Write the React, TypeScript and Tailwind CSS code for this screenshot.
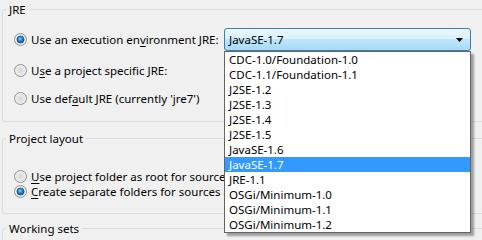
import React from "react";

const items = [
  "CDC-1.0/Foundation-1.0",
  "CDC-1.1/Foundation-1.1",
  "J2SE-1.2",
  "J2SE-1.3",
  "J2SE-1.4",
  "J2SE-1.5",
  "JavaSE-1.6",
  "JavaSE-1.7",
  "JRE-1.1",
  "OSGi/Minimum-1.0",
  "OSGi/Minimum-1.1",
  "OSGi/Minimum-1.2",
];

function Radio({ checked }: { checked?: boolean }) {
  return (
    <svg width="13" height="13" viewBox="0 0 13 13" className="shrink-0">
      <defs>
        <radialGradient id="rbg" cx="50%" cy="50%" r="60%">
          <stop offset="0%" stopColor="#d6d6d6" />
          <stop offset="100%" stopColor="#fafafa" />
        </radialGradient>
        <radialGradient id="rdot" cx="45%" cy="40%" r="60%">
          <stop offset="0%" stopColor="#8fd3ff" />
          <stop offset="45%" stopColor="#2b8ad6" />
          <stop offset="100%" stopColor="#0c4a84" />
        </radialGradient>
      </defs>
      <circle cx="6.5" cy="6.5" r="6" fill="url(#rbg)" stroke="#8e8f8f" strokeWidth="1" />
      <circle cx="6.5" cy="6.5" r="4.5" fill="none" stroke="#e6e6e6" strokeWidth="1" />
      {checked && <circle cx="6.5" cy="6.5" r="3.6" fill="url(#rdot)" stroke="#1b4f7e" strokeWidth="0.6" />}
    </svg>
  );
}

function Option({
  checked,
  pre,
  u,
  post,
  className,
}: {
  checked?: boolean;
  pre: string;
  u: string;
  post: string;
  className?: string;
}) {
  return (
    <div className={"flex items-center gap-[4px] pl-[11px] whitespace-nowrap " + (className ?? "")}>
      <Radio checked={checked} />
      <span>
        {pre}
        <span className="underline underline-offset-2">{u}</span>
        {post}
      </span>
    </div>
  );
}

export default function App() {
  return (
    <div
      className="relative w-[482px] h-[240px] overflow-hidden bg-[#f0f0f0] pl-[2px] text-[11.5px] leading-[15px] text-black"
      style={{ fontFamily: '"Segoe UI", "Noto Sans", sans-serif' }}
    >
      {/* JRE */}
      <fieldset className="mt-[2px] -mr-[10px] h-[120px] rounded-[3px] border border-[#d5dfe5]">
        <legend className="ml-[3px] px-[3px]">JRE</legend>
        <div className="flex h-[23px] items-center mt-[11px]">
          <Option checked pre="Use an execution en" u="v" post="ironment JRE:" className="w-[221px]" />
          <div className="flex h-[23px] w-[247px] items-center justify-between rounded-[3px] border border-[#3c7fb1] bg-[linear-gradient(#eaf6fd_0%,#d9f0fc_50%,#bee6fd_50%,#a7d9f5_100%)] pl-[4px] pr-[7px]">
            <span>JavaSE-1.7</span>
            <svg width="7" height="4" viewBox="0 0 7 4">
              <path d="M0 0h7L3.5 4z" fill="#000" />
            </svg>
          </div>
        </div>
        <Option pre="U" u="s" post="e a project specific JRE:" className="mt-[8px] h-[23px]" />
        <Option pre="Use def" u="a" post="ult JRE (currently 'jre7')" className="mt-[5px] h-[23px]" />
      </fieldset>

      {/* Project layout */}
      <fieldset className="mt-[9px] -mr-[10px] h-[83px] rounded-[3px] border border-[#d5dfe5]">
        <legend className="ml-[3px] px-[3px]">Project layout</legend>
        <Option pre="" u="U" post="se project folder as root for sources and class files" className="mt-[23px] h-[15px] w-[221px] overflow-hidden" />
        <Option checked pre="" u="C" post="reate separate folders for sources and class files" className="h-[15px] w-[221px] overflow-hidden" />
      </fieldset>

      {/* Working sets */}
      <fieldset className="mt-[7px] -mr-[10px] h-[40px] rounded-[3px] border border-[#d5dfe5]">
        <legend className="ml-[3px] px-[3px]">Working sets</legend>
      </fieldset>

      {/* open dropdown list */}
      <div className="absolute left-[224px] top-[51px] w-[247px] h-[182px] border border-[#646464] bg-white shadow-[3px_3px_2px_rgba(0,0,0,0.35)]">
        {items.map((it) => (
          <div
            key={it}
            className={
              "h-[15px] pl-[4px] leading-[15px] whitespace-nowrap " +
              (it === "JavaSE-1.7" ? "bg-[#3399ff] text-white" : "")
            }
          >
            {it}
          </div>
        ))}
      </div>
    </div>
  );
}
